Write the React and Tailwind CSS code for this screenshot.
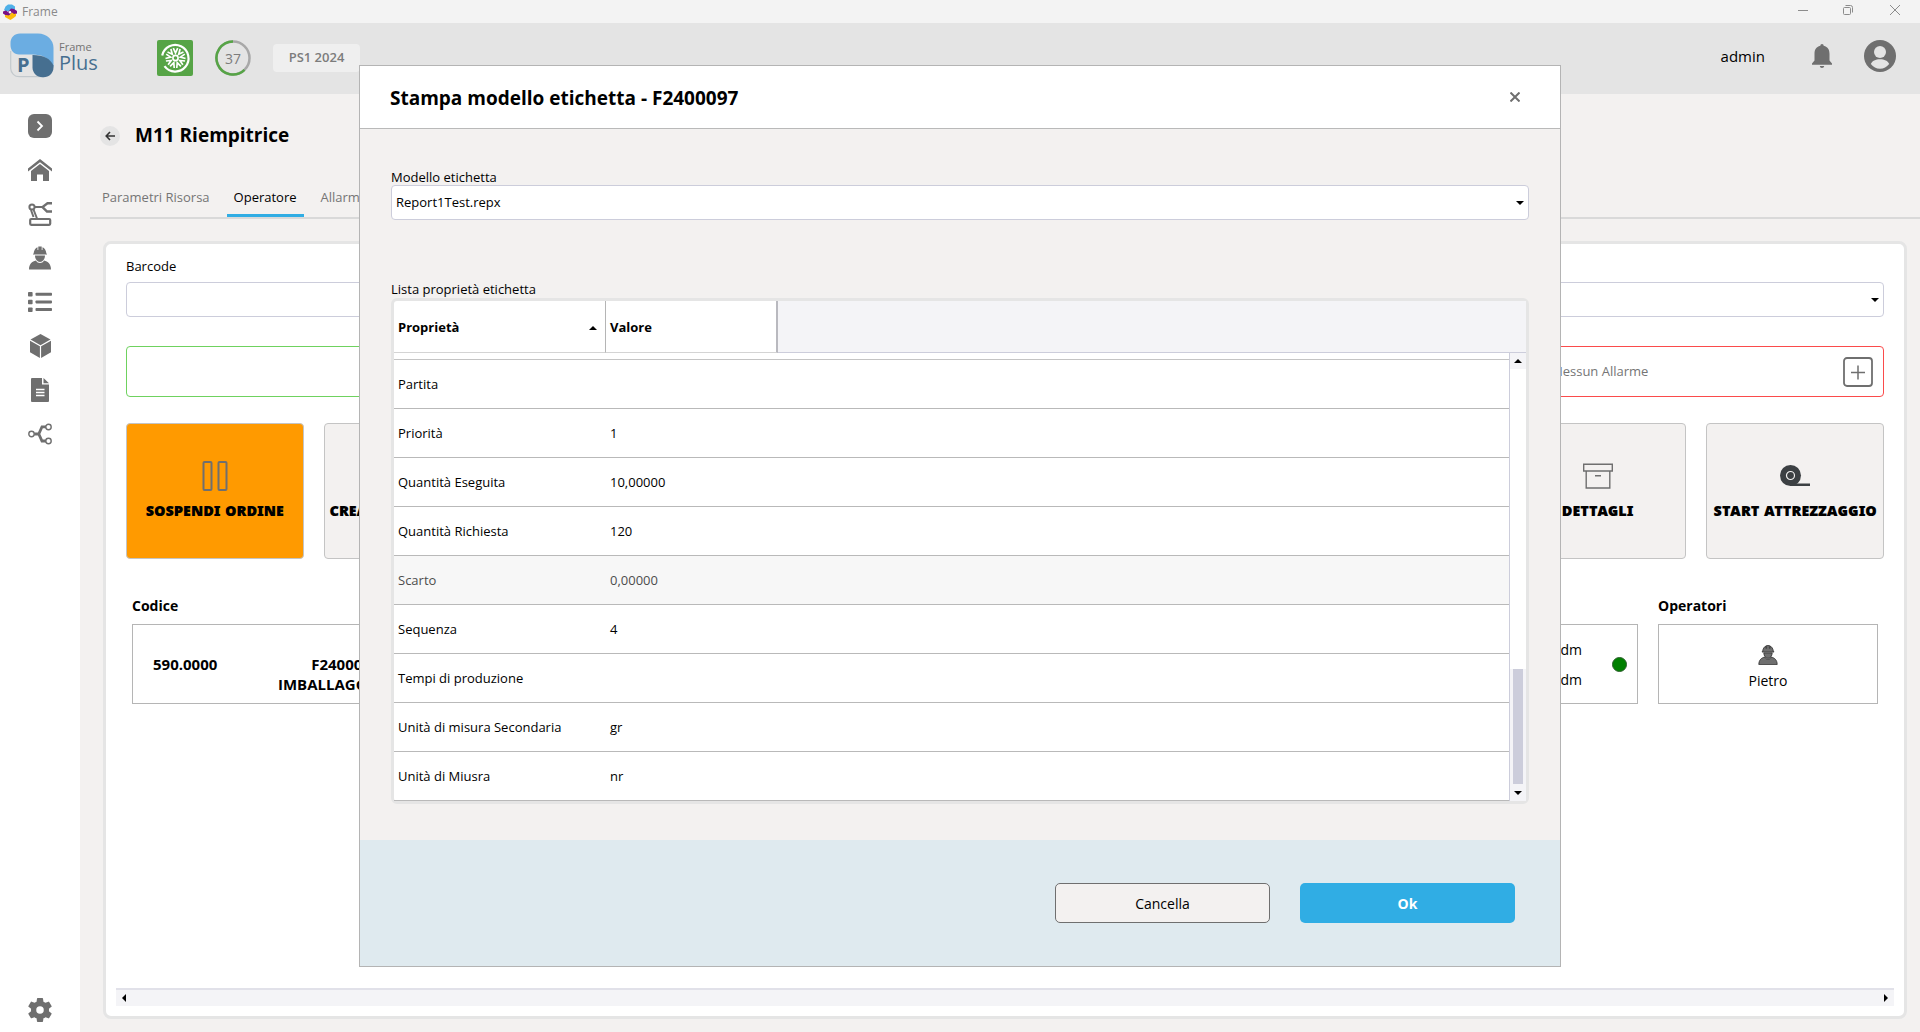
import React from "react";

const GRAY = "#6f6f6f";

function AppMark() {
  return (
    <svg width="16" height="16" viewBox="0 0 16 16" aria-hidden="true">
      <path d="M2 6 3.500 2.500 6 .5h4l3 2V6l-3-1-3 2-3 .500z" fill="#4fb0e8" />
      <path d="M1 7.500 4 6.500l2 1.500 3-3.500 3 .500L15 7v2.500l-3 1-2-1.500-3 3-3-.500L1 9.500z" fill="#7b1083" />
      <path d="M3 11l4 .500 3-3 2 1.500 2-.500v2.500L11.500 14 8.500 16 6.500 15 3 13z" fill="#fdb90b" />
      <circle cx="8" cy="8.300" r="1.200" fill="#fff" />
    </svg>
  );
}

function Logo() {
  return (
    <svg width="44" height="45" viewBox="0 0 44 45" aria-hidden="true">
      <path d="M.7 18v17.500A8.500 8.500 0 0 0 9.200 43.700H34" fill="none" stroke="#c3c9cd" strokeWidth="1.200" />
      <path d="M10 .5h18C37 .5 43.500 7 43.500 15v19C39 25 33 21.500 22 21.500H9C4 21.500.5 17.500.5 12V10C.5 4.500 4.500.5 10 .5Z" fill="#6bade2" />
      <path d="M22.500 22C34 22 40 25.500 43.500 32.500v2c0 5.500-4.500 9.800-10 9.800h-1c-5.500 0-10-4.300-10-9.800Z" fill="#466f90" />
      <text x="7" y="39" fontFamily="Open Sans, sans-serif" fontWeight="700" fontSize="20" fill="#466f90">P</text>
    </svg>
  );
}

function Wheel() {
  const spokes = Array.from({ length: 9 }, (_, i) => i * 40);
  return (
    <svg width="36" height="36" viewBox="0 0 36 36" aria-hidden="true">
      <rect width="36" height="36" rx="2" fill="#56a446" />
      <g fill="none" stroke="#fff">
        <path d="M5.200 15.500A13.300 13.300 0 1 1 7.500 26.200" strokeWidth="2.200" />
        <circle cx="18.500" cy="18" r="2.600" strokeWidth="1.600" />
        {spokes.map((a) => (
          <g key={a} transform={`rotate(${a} 18.500 18)`}>
            <path d="M16.300 8.200 18.500 13l2.200-4.800" strokeWidth="1.700" />
          </g>
        ))}
      </g>
    </svg>
  );
}

function Home() {
  return (
    <svg width="24" height="24" viewBox="0 0 24 24" fill={GRAY}>
      <path d="M12 1 24 10.500v3L12 4.200 0 13.500v-3z" />
      <path d="M12 6 21 13v10h-6v-6.500H9V23H3V13z" />
    </svg>
  );
}
function Robot() {
  return (
    <svg width="24" height="24" viewBox="0 0 24 24" fill="none" stroke={GRAY} strokeWidth="2">
      <circle cx="4" cy="5" r="2.600" />
      <path d="M6.500 5H14M5.500 7.500 9 16.500M3 8l2.500 7" />
      <path d="M24 1.200h-4.500L14.500 5l4.500 4.500h5" strokeWidth="2.400" />
      <rect x="2.200" y="17" width="20" height="5.800" rx="1" strokeWidth="2.200" />
    </svg>
  );
}
function Worker({ size = 24, outline = false }) {
  return (
    <svg width={size} height={size} viewBox="0 0 24 24" fill={GRAY} stroke={outline ? "#333" : "none"} strokeWidth="1">
      <path d="M5 8.500V7.800h.6C5.800 4.500 7.500 2 9.500 1.300V4h.8V.5h3.400V4h.8V1.300c2 .7 3.700 3.200 3.900 6.500h.6v.7z" />
      <path d="M7 9.500h10c0 3.500-2.200 6.500-5 6.500s-5-3-5-6.500z" />
      <path d="M1 23.500C1 18 4 15.500 8 14.500c1 1.800 2.300 2.500 4 2.500s3-.7 4-2.500c4 1 7 3.500 7 9z" />
    </svg>
  );
}
function ListIcon() {
  return (
    <svg width="24" height="24" viewBox="0 0 24 24" fill={GRAY}>
      {[2, 9.700, 17.400].map((y) => (
        <g key={y}>
          <rect x="0" y={y} width="4.600" height="4.600" rx=".8" />
          <rect x="7.500" y={y + 0.7} width="16.500" height="3" rx=".8" />
        </g>
      ))}
    </svg>
  );
}
function Cube() {
  return (
    <svg width="24" height="24" viewBox="0 0 24 24" fill={GRAY}>
      <path d="M12.500 0 22.500 5.600 12.500 11.200 2.500 5.600z" />
      <path d="M2 6.800 11.900 12.300V24L2 18.200zM23 6.800 13.100 12.300V24L23 18.200z" />
    </svg>
  );
}
function Doc() {
  return (
    <svg width="24" height="24" viewBox="0 0 24 24" fill={GRAY}>
      <path d="M4 0h10v6.500h7V23a1 1 0 0 1-1 1H4a1 1 0 0 1-1-1V1a1 1 0 0 1 1-1z" />
      <path d="M15.500 0 21 5.300h-5.500z" />
      <path d="M8 11.500h8.500M8 14.500h8.500M8 17.500h8.500" stroke="#fff" strokeWidth="1.300" />
    </svg>
  );
}
function Share() {
  return (
    <svg width="24" height="24" viewBox="0 0 24 24" fill="none" stroke={GRAY}>
      <g strokeWidth="1.400">
        <circle cx="3.500" cy="12" r="2.700" />
        <circle cx="20.500" cy="5" r="2.700" />
        <circle cx="20.500" cy="19" r="2.700" />
      </g>
      <path d="M6.200 12H10M18 4.800h-4L10.800 12l3.200 7h4" strokeWidth="2.800" />
    </svg>
  );
}
function Gear() {
  return (
    <svg width="30" height="30" viewBox="0 0 24 24" fill={GRAY} aria-hidden="true">
      <path d="M19.140 12.940c.04-.3.060-.61.060-.94 0-.32-.02-.64-.07-.94l2.030-1.580a.49.490 0 0 0 .12-.61l-1.920-3.320a.488.488 0 0 0-.59-.22l-2.390.96c-.5-.38-1.030-.7-1.620-.94l-.36-2.540a.484.484 0 0 0-.48-.41h-3.840c-.24 0-.43.170-.47.410l-.36 2.540c-.59.240-1.130.570-1.620.940l-2.390-.96c-.22-.08-.47 0-.59.220L2.740 8.870c-.12.210-.08.470.12.610l2.030 1.580c-.05.300-.09.630-.09.940s.020.640.070.940l-2.030 1.580a.49.490 0 0 0-.12.610l1.920 3.320c.12.220.37.290.59.220l2.390-.96c.5.380 1.030.7 1.620.940l.36 2.540c.05.240.24.410.48.410h3.840c.24 0 .44-.17.470-.41l.36-2.540c.59-.24 1.130-.56 1.620-.94l2.390.96c.22.080.47 0 .59-.22l1.920-3.320c.12-.22.070-.47-.12-.61l-2.010-1.580zM12 15a3 3 0 1 1 0-6 3 3 0 0 1 0 6z" />
    </svg>
  );
}

function Caret({ dir = "down" }) {
  const d = {
    down: "M0 2h8L4 6z",
    up: "M0 6h8L4 2z",
    left: "M6 0v8L2 4z",
    right: "M2 0v8l4-4z",
  }[dir];
  return (
    <svg width="8" height="8" viewBox="0 0 8 8" aria-hidden="true">
      <path d={d} fill="#000" />
    </svg>
  );
}

function Combo({ id, options, label }) {
  return (
    <div className="relative">
      <select
        id={id}
        aria-label={label}
        className="block h-[35px] w-full appearance-none rounded border border-[#cccddb] bg-white px-1 pt-px text-[13px] text-black"
      >
        {options.map((o) => (
          <option key={o}>{o}</option>
        ))}
      </select>
      <span className="pointer-events-none absolute inset-y-0 right-[5px] flex items-center">
        <Caret />
      </span>
    </div>
  );
}

const nav = [
  ["Home", Home],
  ["Risorse", Robot],
  ["Operatori", Worker],
  ["Elenco", ListIcon],
  ["Articoli", Cube],
  ["Documenti", Doc],
  ["Flussi", Share],
];

function TitleBar() {
  return (
    <div className="flex h-[23px] items-center bg-[#f3f3f3] pl-[2px] text-[12px] text-[#8a8a8a]">
      <AppMark />
      <span className="ml-1">Frame</span>
      <div className="ml-auto flex h-full items-start">
        <button aria-label="Riduci" className="grid h-5 w-[45px] place-items-center">
          <svg width="10" height="10" fill="none" stroke="#8c8c8c"><path d="M0 5.500h10" /></svg>
        </button>
        <button aria-label="Ripristina" className="grid h-5 w-[45px] place-items-center">
          <svg width="10" height="10" fill="none" stroke="#8c8c8c">
            <rect x=".5" y="2.500" width="7" height="7" rx="1" />
            <path d="M2.500.5h5a2 2 0 0 1 2 2v5" />
          </svg>
        </button>
        <button aria-label="Chiudi finestra" className="grid h-5 w-[50px] place-items-center">
          <svg width="10" height="10" fill="none" stroke="#8c8c8c"><path d="M0 0 10 10M10 0 0 10" /></svg>
        </button>
      </div>
    </div>
  );
}

function Header() {
  return (
    <header className="flex h-[71px] items-center bg-[#e4e4e4] pr-6 pb-px">
      <div className="flex w-[157px] items-center pb-[6px] pl-[10px]">
        <Logo />
        <div className="ml-[5px] flex flex-col text-[#466f90]">
          <span className="text-[11px] leading-4 text-[#737373]">Frame</span>
          <span className="text-[20px] leading-4">Plus</span>
        </div>
      </div>
      <Wheel />
      <div className="relative ml-[22px] grid size-9 place-items-center text-[14px] text-[#7c7c7c]">
        <svg className="absolute inset-0" width="36" height="36" fill="none" strokeWidth="2.500">
          <circle cx="18" cy="18" r="16.500" stroke="#a8a8a8" />
          <path d="M18 1.500A16.500 16.500 0 1 0 29.500 29.800" stroke="#56a446" />
        </svg>
        37
      </div>
      <div className="ml-[22px] grid h-7 w-[87px] place-items-center rounded bg-[#efefef] text-[13px] font-semibold text-[#7c7c7c]">
        PS1 2024
      </div>
      <div className="ml-auto flex items-center pb-1">
        <span className="text-[15px] text-black">admin</span>
        <button aria-label="Notifiche" className="ml-[47px]">
          <svg width="20" height="24" viewBox="0 0 20 24" fill={GRAY}>
            <path d="M8.300 1.800a1.700 1.700 0 0 1 3.400 0C16 2.800 17.500 6 17.500 10v6.500L20 19.500v1.300H0v-1.300l2.500-3V10c0-4 1.500-7.200 5.800-8.200zM7.800 22h4.400c-.2 1.300-1 2-2.200 2s-2-.7-2.200-2z" />
          </svg>
        </button>
        <button aria-label="Profilo" className="ml-8">
          <svg width="32" height="32" viewBox="0 0 32 32">
            <circle cx="16" cy="16" r="16" fill={GRAY} />
            <circle cx="16" cy="12" r="6" fill="#e4e4e4" />
            <path d="M6.800 24c1.200-3.200 5-4.800 9.200-4.800s8 1.600 9.200 4.800c-2.500 3-5.500 4.700-9.200 4.700S9.300 27 6.800 24z" fill="#e4e4e4" />
          </svg>
        </button>
      </div>
    </header>
  );
}

function Sidebar() {
  return (
    <nav className="flex w-20 shrink-0 flex-col items-center gap-5 bg-white pt-5 pb-[7px]">
      <button aria-label="Espandi menu" className="grid size-6 place-items-center rounded-md bg-[#6f6f6f]">
        <svg width="8" height="12" fill="none" stroke="#fff" strokeWidth="1.800"><path d="M1.500 1.500 6 6l-4.500 4.500" /></svg>
      </button>
      {nav.map(([name, Icon]) => (
        <a key={name} href="#" aria-label={name}>
          <Icon />
        </a>
      ))}
      <a href="#" aria-label="Impostazioni" className="mt-auto">
        <Gear />
      </a>
    </nav>
  );
}

function Card({ label, children, tone = "bg-[#f3f1f0]", align = "items-center" }) {
  return (
    <button
      className={`flex h-[136px] flex-col justify-center overflow-hidden rounded border border-[#c4c4c4] px-[5px] pt-0.5 ${align} ${tone}`}
    >
      <span className="flex h-9 items-center self-center">{children}</span>
      <span className="font-['Noto_Sans',sans-serif] text-[17px] leading-8 font-black whitespace-nowrap text-black [font-variant-caps:all-small-caps]">
        {label}
      </span>
    </button>
  );
}

function BoxIcon() {
  return (
    <svg width="30" height="26" viewBox="0 0 30 26" fill="none" stroke={GRAY} strokeWidth="1.400">
      <path d="M.7 1.200h28.600v6.800H.7zM3.200 8v17h23.600V8M12 12.800h6" />
    </svg>
  );
}
function TapeIcon() {
  return (
    <svg width="30" height="22" viewBox="0 0 30 22">
      <circle cx="10.500" cy="10.500" r="10.500" fill="#3c4043" />
      <path d="M10 18.500h20V21H10z" fill="#3c4043" />
      <circle cx="10.500" cy="10.500" r="4" fill="#3c4043" stroke="#f3f1f0" strokeWidth="1.200" />
    </svg>
  );
}
function PauseIcon() {
  return (
    <svg width="26" height="30" viewBox="0 0 26 30" fill="none" stroke={GRAY} strokeWidth="2">
      <rect x="1.500" y="1" width="8" height="28" rx="1" />
      <rect x="16.500" y="1" width="8" height="28" rx="1" />
    </svg>
  );
}

function Workspace() {
  return (
    <main className="flex min-w-0 flex-1 flex-col bg-[#f3f1f0] pb-[13px] text-[13px] text-black">
      <div className="flex h-[84px] items-center pb-px pl-5">
        <button aria-label="Indietro" className="grid size-5 place-items-center rounded-full bg-[#e4e4e4]">
          <svg width="10" height="10" fill="none" stroke="#333" strokeWidth="1.600"><path d="M10 5H1.500M5 1 1.200 5 5 9" /></svg>
        </button>
        <h1 className="ml-[15px] text-[19px] font-bold">M11 Riempitrice</h1>
      </div>
      <div role="tablist" className="ml-[10px] flex gap-[10px] border-b-2 border-[#d9d9d9] pl-[5px] text-[#757575]">
        <button role="tab" className="h-[39px] border-b-[3px] border-transparent px-[7px] pt-1">Parametri Risorsa</button>
        <button role="tab" aria-selected="true" className="h-[39px] border-b-[3px] border-[#30ade4] px-[7px] pt-1 text-black">Operatore</button>
        <button role="tab" className="h-[39px] border-b-[3px] border-transparent px-[7px] pt-1">Allarmi</button>
      </div>
      <section className="mt-[22px] mr-[13px] ml-[23px] flex flex-1 flex-col rounded-lg border-[3px] border-[#e5e5e5] bg-white pb-[10px]">
        <div className="px-5 pt-[13px]">
          <label htmlFor="barcode" className="block leading-[18px]">Barcode</label>
          <div className="mt-[7px] grid grid-cols-2 gap-5">
            <input id="barcode" className="h-[35px] rounded border border-[#cccddb] bg-white px-1" />
            <Combo id="fase" label="Fase" options={[""]} />
          </div>
          <div className="mt-[29px] grid grid-cols-3 gap-5">
            <div className="h-[51px] rounded border border-[#6fd25f]" />
            <div className="h-[51px] rounded border border-[#c4c4c4]" />
            <div className="grid h-[51px] grid-cols-[1fr_auto_1fr] items-center rounded border border-[#fb4b4b] pr-[10px] pl-4">
              <span />
              <span className="pt-px text-[#757575]">Nessun Allarme</span>
              <button aria-label="Aggiungi allarme" className="justify-self-end">
                <svg width="30" height="30" fill="none" stroke={GRAY} strokeWidth="1.800">
                  <rect x="1" y="1" width="28" height="28" rx="3" />
                  <path d="M8 15.500h14M15 8.500v14" strokeWidth="1.500" />
                </svg>
              </button>
            </div>
          </div>
          <div className="mt-[26px] grid grid-cols-9 gap-5">
            <Card label="SOSPENDI ORDINE" tone="bg-[#ff9a00]"><PauseIcon /></Card>
            <Card label="CREA NUOVO ORDINE" align="items-start" />
            <Card /><Card /><Card /><Card /><Card />
            <Card label="DETTAGLI"><BoxIcon /></Card>
            <Card label="START ATTREZZAGGIO"><TapeIcon /></Card>
          </div>
        </div>
        <div className="mt-[37px] flex gap-5 px-[26px] text-[14px] leading-5">
          <div className="min-w-0 flex-1">
            <h2 className="font-bold">Codice</h2>
            <div className="mt-2 flex h-20 items-center border border-[#b5b5b5] px-5">
              <span className="mb-5 w-[125px] pt-5 text-[15px] font-bold">590.0000</span>
              <span className="pt-5 text-center text-[15px] font-bold">F2400097<br />IMBALLAGGIO SET</span>
              <span className="ml-auto flex flex-col gap-[10px] pt-0.5 text-right">
                <span>0 dm</span>
                <span>0 dm</span>
              </span>
              <span className="mr-[-10px] ml-[30px] size-[15px] rounded-full border border-[#2b5f2b] bg-[#008000]" />
            </div>
          </div>
          <div className="w-[220px]">
            <h2 className="font-bold">Operatori</h2>
            <div className="mt-2 flex h-20 flex-col items-center justify-center gap-[6px] border border-[#b5b5b5] pt-2">
              <Worker size={20} outline />
              <span>Pietro</span>
            </div>
          </div>
        </div>
        <div className="mx-[10px] mt-auto flex h-[18px] items-center justify-between border-t-2 border-[#e1e1e9] bg-[#f4f4f7] px-1">
          <Caret dir="left" />
          <Caret dir="right" />
        </div>
      </section>
    </main>
  );
}

const rows = [
  ["Partita", ""],
  ["Priorità", "1"],
  ["Quantità Eseguita", "10,00000"],
  ["Quantità Richiesta", "120"],
  ["Scarto", "0,00000"],
  ["Sequenza", "4"],
  ["Tempi di produzione", ""],
  ["Unità di misura Secondaria", "gr"],
  ["Unità di Miusra", "nr"],
];

function PropertyTable() {
  return (
    <div className="relative rounded-md border-[3px] border-[#e5e5e5] bg-white">
      <table aria-labelledby="props-label" className="w-full table-fixed border-separate border-spacing-0">
        <colgroup>
          <col className="w-[212px]" />
          <col className="w-[172px]" />
          <col />
        </colgroup>
        <thead>
          <tr className="h-[52px] text-left">
            <th className="border-r border-b border-r-[#b5b5b5] border-b-[#d4d4d4] p-0 pt-0.5 pr-2 pl-1 font-bold">
              <div className="flex items-center justify-between">Proprietà <Caret dir="up" /></div>
            </th>
            <th className="border-r-2 border-b border-r-[#b9b9bf] border-b-[#d4d4d4] p-0 pt-0.5 pl-1 font-bold">Valore</th>
            <td className="border-b border-[#cccddb] bg-[#f4f4f7]" />
          </tr>
        </thead>
        <tbody>
          <tr className="h-[7px]">
            <td colSpan={3} className="border-b border-[#c4c4c4] p-0" />
          </tr>
          {rows.map(([name, value]) => (
            <tr key={name} className={name === "Scarto" ? "h-[49px] bg-[#f7f7f7] text-[#4d4d4d]" : "h-[49px]"}>
              <td className="border-b border-[#b9b9b9] p-0 pt-0.5 pl-1">{name}</td>
              <td colSpan={2} className="border-b border-[#b9b9b9] p-0 pt-0.5 pl-1">{value}</td>
            </tr>
          ))}
        </tbody>
      </table>
      <div className="absolute top-[52px] right-0 bottom-0 flex w-[17px] flex-col items-center border-l border-[#cccddb] bg-white">
        <div className="grid h-4 w-full place-items-center bg-[#f4f4f7]"><Caret dir="up" /></div>
        <div className="flex-1" />
        <div className="flex w-full justify-center bg-[#f4f4f7]"><div className="h-[115px] w-[10px] bg-[#cccddb]" /></div>
        <div className="grid h-[17px] w-full place-items-center bg-[#f4f4f7]"><Caret /></div>
      </div>
    </div>
  );
}

function Dialog() {
  return (
    <div className="fixed inset-0 flex items-center justify-center">
      <div role="dialog" aria-labelledby="dlg-title" className="w-full max-w-[1202px] border border-[#b4b4b4] bg-[#f3f1f0] text-[13px] text-black">
        <div className="flex h-[63px] items-center justify-between border-b border-[#b9b9b9] bg-white pr-10 pl-[30px]">
          <h2 id="dlg-title" className="pt-0.5 text-[19px] font-bold">Stampa modello etichetta - F2400097</h2>
          <button aria-label="Chiudi" className="grid place-items-center">
            <svg width="10" height="10" fill="none" stroke="#6f6f6f" strokeWidth="2"><path d="M.5.5 9.500 9.500M9.500.5.5 9.500" /></svg>
          </button>
        </div>
        <div className="px-[31px] pt-10 pb-9">
          <label htmlFor="model" className="block leading-4">Modello etichetta</label>
          <Combo id="model" options={["Report1Test.repx"]} />
          <div id="props-label" className="mt-[60px] leading-[18px]">Lista proprietà etichetta</div>
          <PropertyTable />
        </div>
        <div className="flex h-[126px] items-center justify-end gap-[30px] bg-[#dfeaef] pr-[45px] text-[14px]">
          <button className="h-10 w-[215px] rounded-[5px] border border-[#6f6f6f] bg-[#f3f1f0]">Cancella</button>
          <button className="h-10 w-[215px] rounded-[5px] bg-[#30ade4] font-bold text-white">Ok</button>
        </div>
      </div>
    </div>
  );
}

export default function App() {
  return (
    <div className="flex min-h-screen flex-col bg-[#f3f1f0] font-['Open_Sans',sans-serif]">
      <TitleBar />
      <Header />
      <div className="flex flex-1">
        <Sidebar />
        <Workspace />
      </div>
      <Dialog />
    </div>
  );
}
